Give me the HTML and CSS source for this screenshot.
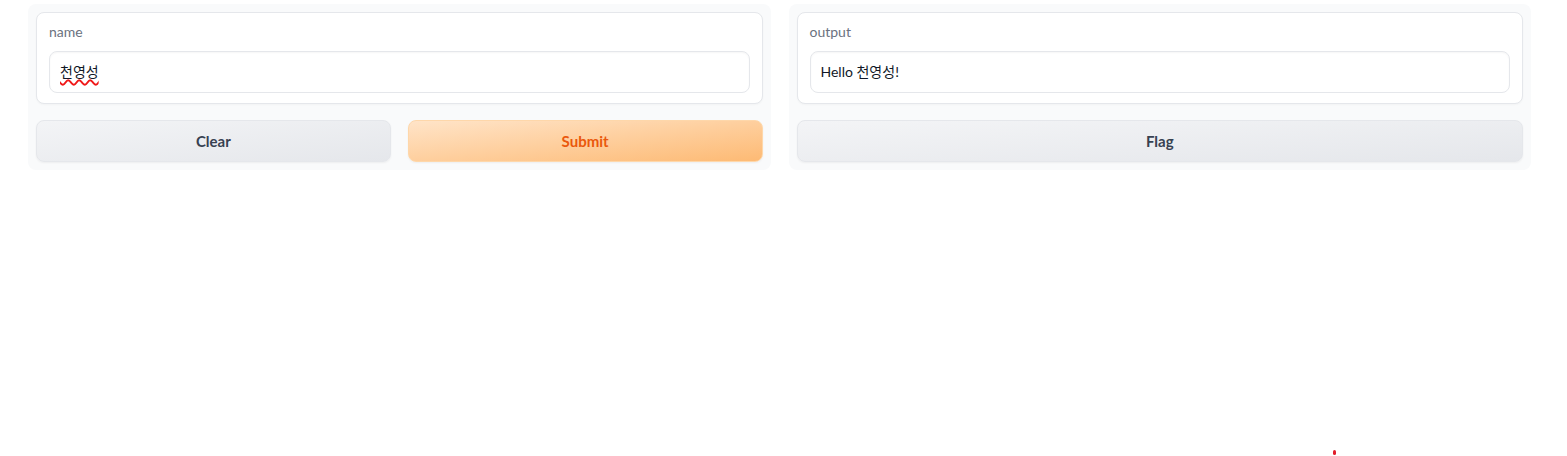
FILE: index.html
```html
<!DOCTYPE html>
<html>
<head>
    <meta charset="UTF-8">
    <title>Greeting</title>
    <link rel="stylesheet" href="styles.css">
</head>
<body>
    <!-- Two panels: input form and output -->
    <div class="app">
        <div class="panel">
            <div class="block">
                <label class="block-label" for="name">name</label>
                <div class="textbox" id="name"><span class="misspelled">천영성</span></div>
            </div>
            <div class="button-row">
                <button class="btn btn-secondary">Clear</button>
                <button class="btn btn-primary">Submit</button>
            </div>
        </div>

        <div class="panel">
            <div class="block">
                <label class="block-label" for="output">output</label>
                <div class="textbox" id="output">Hello 천영성!</div>
            </div>
            <div class="button-row">
                <button class="btn btn-secondary">Flag</button>
            </div>
        </div>
    </div>

    <div class="cursor-dot"></div>
</body>
</html>
```

FILE: styles.css
```css
/* General Styling */
body {
    margin: 0;
    background-color: #fff;
    font-family: 'Lato', 'Noto Sans CJK KR', sans-serif;
    color: #1f2937;
}

.app {
    display: grid;
    grid-template-columns: 1fr 1fr;
    gap: 18px;
    padding: 4px 36px 0 28px;
}

/* Panel */
.panel {
    background-color: #f9fafb;
    border-radius: 8px;
    padding: 8px;
    display: flex;
    flex-direction: column;
    gap: 16px;
}

.block {
    background-color: #fff;
    border: 1px solid #e5e7eb;
    border-radius: 8px;
    padding: 10px 12px;
    box-shadow: 0 1px 2px rgba(0, 0, 0, 0.03);
}

.block-label {
    display: block;
    font-size: 14px;
    line-height: 18px;
    color: #6b7280;
    margin-bottom: 10px;
}

.textbox {
    border: 1px solid #e5e7eb;
    border-radius: 8px;
    padding: 10px;
    font-size: 14px;
    line-height: 20px;
    color: #111827;
    box-shadow: inset 0 1px 2px rgba(0, 0, 0, 0.04);
}

.misspelled {
    text-decoration: underline wavy #f01818;
    text-decoration-thickness: 1.5px;
    text-underline-offset: 2px;
}

/* Buttons */
.button-row {
    display: flex;
    gap: 17px;
}

.btn {
    flex: 1;
    height: 42px;
    font-family: 'Lato', sans-serif;
    font-size: 15px;
    font-weight: 700;
    border-radius: 8px;
    cursor: pointer;
    box-shadow: 0 1px 2px rgba(0, 0, 0, 0.05);
}

.btn-secondary {
    background: linear-gradient(to bottom right, #f3f4f6, #e5e7eb);
    border: 1px solid #e5e7eb;
    color: #374151;
}

.btn-primary {
    background: linear-gradient(to bottom right, #ffe4c8, #fdba74);
    border: 1px solid #fed7aa;
    color: #ea580c;
}

.cursor-dot {
    position: absolute;
    left: 1333px;
    top: 450px;
    width: 3px;
    height: 5px;
    border-radius: 2px;
    background-color: #e11d2a;
}
```
